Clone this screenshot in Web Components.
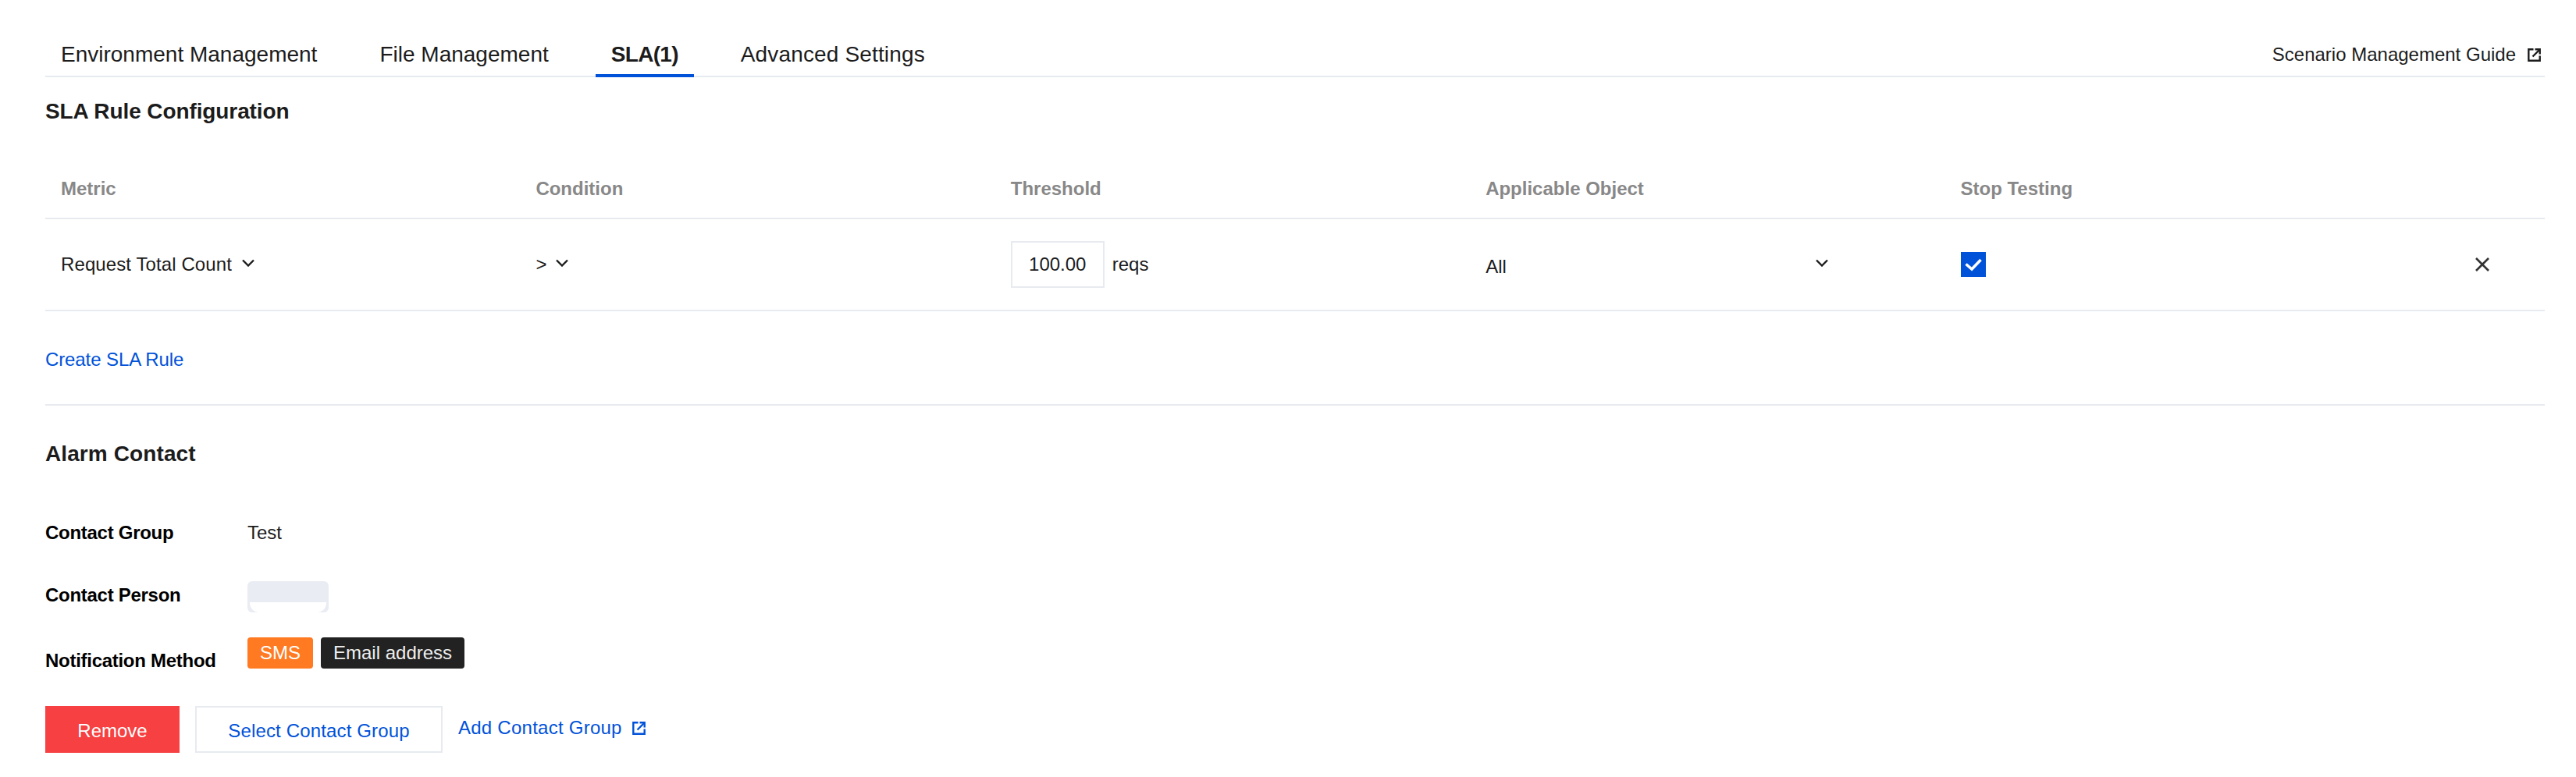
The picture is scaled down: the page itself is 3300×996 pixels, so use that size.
<!DOCTYPE html>
<html>
<head>
<meta charset="utf-8">
<style>
    html, body { margin: 0; background: #fff; }
    body { font-family: "Liberation Sans", Arial, sans-serif; color: #1c1c1c; }
</style>
</head>
<body>
<sla-page></sla-page>

<script>
const ICONS = {
    chevron: `<svg class="chevron" width="16" height="10" viewBox="0 0 16 10" fill="none" stroke="currentColor" stroke-width="2.4"><path d="M1 1.5 L8 8.5 L15 1.5"/></svg>`,
    external: `<svg width="17" height="17" viewBox="0 0 17 17" fill="none" stroke="currentColor" stroke-width="2.4"><path d="M7.5 1.3 H1.3 V15.7 H15.7 V9.5"/><path d="M6.5 10.5 L15 2"/><path d="M9.5 1.3 H15.7 V7.5"/></svg>`,
    close: `<svg width="18" height="18" viewBox="0 0 18 18" fill="none" stroke="currentColor" stroke-width="2.6"><path d="M1 1 L17 17 M17 1 L1 17"/></svg>`,
    check: `<svg width="32" height="32" viewBox="0 0 32 32" fill="none" stroke="#fff" stroke-width="3.6"><path d="M6.5 15.5 L14 22 L25.5 10"/></svg>`
};

class SlaTabs extends HTMLElement{
    constructor(){
        super();
        this.shadow = this.attachShadow({mode: 'open'});
        this.shadow.innerHTML = `
            <style>
                :host {
                    display: flex;
                    justify-content: space-between;
                    height: 99px;
                    box-sizing: border-box;
                    border-bottom: 2px solid #e7eaef;
                    padding-top: 40px;
                }
                .tabs { display: flex; }
                .tab {
                    height: 59px;
                    box-sizing: border-box;
                    padding: 0 20px;
                    margin-right: 40px;
                    font-size: 28px;
                    line-height: 60px;
                    border-bottom: 4px solid transparent;
                }
                .tab:last-child { margin-right: 0; letter-spacing: .15px; }
                .active { font-weight: bold; letter-spacing: -.7px; border-bottom-color: #0052d9; }
                .guide {
                    display: flex;
                    align-items: center;
                    gap: 15px;
                    height: 60px;
                    padding-right: 5px;
                    font-size: 24px;
                }
            </style>
            <div class="tabs">
                <div class="tab">Environment Management</div>
                <div class="tab">File Management</div>
                <div class="tab active">SLA(1)</div>
                <div class="tab">Advanced Settings</div>
            </div>
            <div class="guide">Scenario Management Guide ${ICONS.external}</div>
        `;
    }
}
customElements.define('sla-tabs', SlaTabs);

class SlaTable extends HTMLElement{
    constructor(){
        super();
        this.shadow = this.attachShadow({mode: 'open'});
        this.shadow.innerHTML = `
            <style>
                :host { display: block; font-size: 24px; margin-top: 33px; }
                .row {
                    display: grid;
                    grid-template-columns: repeat(5, 19%) 1fr;
                    align-items: center;
                    box-sizing: border-box;
                    border-bottom: 2px solid #e7eaef;
                }
                .head { height: 85px; padding-top: 8px; font-weight: bold; color: #888; }
                .body { height: 118px; }
                .cell { padding-left: 20px; display: flex; align-items: center; gap: 12px; }
                .metric { letter-spacing: .1px; gap: 13px; }
                .chevron { margin-bottom: 4px; }
                .select { width: 439px; justify-content: space-between; gap: 0; }
                .select span { padding-top: 5px; }
                .threshold { gap: 10px; }
                .input {
                    width: 120px;
                    height: 60px;
                    box-sizing: border-box;
                    border: 2px solid #e7eaef;
                    display: flex;
                    align-items: center;
                    justify-content: center;
                }
                .box { width: 32px; height: 32px; background: #0052d9; }
                .box svg { display: block; }
                .remove { justify-content: flex-end; padding-right: 71px; color: #333; }
                svg { flex: none; }
            </style>
            <div class="row head">
                <div class="cell">Metric</div>
                <div class="cell">Condition</div>
                <div class="cell">Threshold</div>
                <div class="cell">Applicable Object</div>
                <div class="cell">Stop Testing</div>
            </div>
            <div class="row body">
                <div class="cell metric">Request Total Count ${ICONS.chevron}</div>
                <div class="cell">&gt; ${ICONS.chevron}</div>
                <div class="cell threshold"><div class="input">100.00</div>reqs</div>
                <div class="cell select"><span>All</span> ${ICONS.chevron}</div>
                <div class="cell"><div class="box">${ICONS.check}</div></div>
                <div class="cell remove">${ICONS.close}</div>
            </div>
        `;
    }
}
customElements.define('sla-table', SlaTable);

class SlaField extends HTMLElement{
    constructor(){
        super();
        this.shadow = this.attachShadow({mode: 'open'});
        this.shadow.innerHTML = `
            <style>
                :host { display: flex; align-items: flex-start; font-size: 24px; line-height: 40px; }
                .label {
                    width: 259px;
                    margin-top: var(--label-offset, 0);
                    font-weight: bold;
                    letter-spacing: -.28px;
                    color: #000;
                }
            </style>
            <div class="label"></div>
            <slot></slot>
        `;
        this.shadow.querySelector('.label').textContent = this.getAttribute('label');
    }
}
customElements.define('sla-field', SlaField);

class SlaPage extends HTMLElement{
    constructor(){
        super();
        this.shadow = this.attachShadow({mode: 'open'});
        this.shadow.innerHTML = `
            <style>
                :host { display: block; padding: 0 40px 0 58px; }
                h2 { margin: 0; font-size: 28px; font-weight: bold; line-height: 40px; }
                .first { margin-top: 24px; letter-spacing: -.1px; }
                .link { color: #0052d9; font-size: 24px; }
                .create { margin: 47px 0 42px; line-height: 30px; letter-spacing: -.1px; }
                hr { border: 0; border-top: 2px solid #e7eaef; margin: 0 0 42px; }
                .alarm { letter-spacing: .1px; }
                .fields { display: flex; flex-direction: column; margin-top: 61px; }
                .group { height: 40px; }
                .person { height: 42px; margin-top: 40px; }
                .method { height: 50px; margin-top: 32px; --label-offset: 10px; }
                .placeholder {
                    width: 104px;
                    height: 40px;
                    margin-top: 2px;
                    box-sizing: border-box;
                    padding: 27px 3px 0;
                    border-radius: 6px;
                    background: #e9ecf2;
                }
                .placeholder div { height: 13px; background: #fff; border-radius: 0 0 12px 12px; }
                .tags { display: flex; gap: 10px; }
                .tag {
                    height: 40px;
                    line-height: 40px;
                    padding: 0 16px;
                    border-radius: 4px;
                    color: #fff;
                }
                .sms { background: #ff7a21; }
                .email { background: #222; color: #eee; }
                .actions { display: flex; gap: 20px; margin-top: 38px; font-size: 24px; align-items: center; }
                .btn {
                    height: 60px;
                    box-sizing: border-box;
                    padding-top: 3px;
                    display: flex;
                    align-items: center;
                    justify-content: center;
                }
                .danger { width: 172px; background: #f64041; color: #fff; }
                .weak { width: 317px; border: 2px solid #e7eaef; color: #0052d9; letter-spacing: .15px; }
                .add { display: flex; align-items: center; gap: 13px; margin-bottom: 4px; letter-spacing: .25px; }
            </style>
            <sla-tabs></sla-tabs>
            <h2 class="first">SLA Rule Configuration</h2>
            <sla-table></sla-table>
            <div class="link create">Create SLA Rule</div>
            <hr>
            <h2 class="alarm">Alarm Contact</h2>
            <div class="fields">
                <sla-field class="group" label="Contact Group">Test</sla-field>
                <sla-field class="person" label="Contact Person"><div class="placeholder"><div></div></div></sla-field>
                <sla-field class="method" label="Notification Method"><div class="tags"><div class="tag sms">SMS</div><div class="tag email">Email address</div></div></sla-field>
            </div>
            <div class="actions">
                <div class="btn danger">Remove</div>
                <div class="btn weak">Select Contact Group</div>
                <div class="link add">Add Contact Group ${ICONS.external}</div>
            </div>
        `;
    }
}
customElements.define('sla-page', SlaPage);
</script>
</body>
</html>
